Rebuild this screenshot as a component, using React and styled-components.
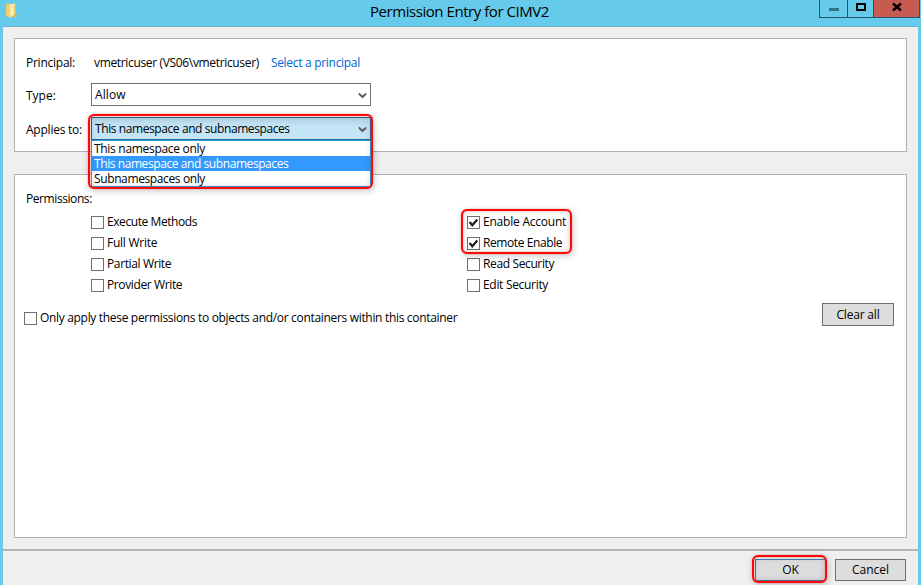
import React from "react";
import styled, { createGlobalStyle } from "styled-components";

const GlobalStyle = createGlobalStyle`
  *, *::before, *::after { box-sizing: border-box; }
  body { margin: 0; background: #66caea; }
`;

const Window = styled.div`
  width: 921px;
  height: 585px;
  overflow: hidden;
  display: flex;
  flex-direction: column;
  background: #66caea;
  color: #000;
  font: 12px/16px "Open Sans", "Noto Sans", sans-serif;
  white-space: nowrap;
`;

const TitleBar = styled.header`
  display: grid;
  grid-template-columns: 370px 1fr auto;
  height: 26px;
  padding-right: 1px;
`;

const FolderIcon = styled.svg`
  width: 14px;
  height: 17px;
  margin: 2px 0 0 5px;
`;

const Title = styled.h1`
  margin: 0;
  padding-top: 1px;
  font-size: 15px;
  line-height: 20px;
  font-weight: 400;
  letter-spacing: -0.45px;
`;

const WindowControls = styled.div`
  display: flex;
  height: 18px;
  border: 1px solid #24516b;
  border-top: 0;
`;

const ControlButton = styled.button`
  display: flex;
  justify-content: center;
  width: ${(p) => p.$width}px;
  padding: 0;
  border: 0;
  border-left: ${(p) => (p.$first ? "0" : "1px solid #24516b")};
  background: ${(p) => (p.$close ? "#c75b52" : "#66caea")};

  svg { display: block; width: 12px; height: 14px; }
`;

const Client = styled.main`
  flex: 1;
  display: flex;
  flex-direction: column;
  margin: 0 3px;
  padding-top: 11px;
  border-top: 1px solid #76afc4;
  background: #efefef;
`;

const Panel = styled.section`
  width: 893px;
  height: ${(p) => p.$height}px;
  margin: 0 0 ${(p) => p.$gap}px 11px;
  border: 1px solid #b1b1b1;
  background: #fff;
`;

const Text = styled.span`
  letter-spacing: ${(p) => p.$track || 0}px;
`;

const Link = styled.a`
  margin-left: 12px;
  color: #0066d6;
  letter-spacing: -0.3px;
`;

const PrincipalRow = styled.div`
  display: grid;
  grid-template-columns: 68px auto 1fr;
  padding: 16px 0 0 11px;
`;

const FieldRow = styled.div`
  display: grid;
  grid-template-columns: 65px 280px;
  align-items: center;
  height: 23px;
  margin: ${(p) => p.$top}px 0 0 11px;
`;

const FieldLabel = styled(Text)`
  padding-top: 3px;
`;

const Combo = styled.div`
  position: relative;
  height: 23px;
  display: flex;
  align-items: center;
  justify-content: space-between;
  padding: 0 3px 0 3px;
  border: 1px solid ${(p) => (p.$open ? "#2c628b" : "#707070")};
  background: ${(p) => (p.$open ? "linear-gradient(#b4d5e6, #c3e5f6 9px)" : "#fff")};

  > svg { width: 9px; height: 8px; }
`;

const Options = styled.ul`
  position: absolute;
  z-index: 1;
  top: 22px;
  left: -1px;
  width: 280px;
  margin: 0;
  padding: 0;
  list-style: none;
  border: 1px solid #26a0da;
  background: #fff;
`;

const Option = styled.li`
  height: 15px;
  padding-left: 2px;
  line-height: 15px;
  letter-spacing: ${(p) => p.$track}px;
  color: ${(p) => (p.$selected ? "#fff" : "#000")};
  background: ${(p) => (p.$selected ? "#3399ff" : "#fff")};
`;

const Highlight = styled.div`
  position: absolute;
  z-index: 2;
  top: ${(p) => p.$top}px;
  left: ${(p) => p.$left}px;
  width: ${(p) => p.$width}px;
  height: ${(p) => p.$height}px;
  border: 2px solid #ff0808;
  border-radius: 6px;
  box-shadow: 0 0 1px #f44, 1px 2px 7px rgba(0, 0, 0, 0.22), inset 0 0 1px #f44, inset 0 0 7px rgba(0, 0, 0, 0.17);
  pointer-events: none;
`;

const PermissionsLabel = styled.div`
  padding: 16px 0 0 11px;
  letter-spacing: -0.42px;
`;

const PermissionGrid = styled.div`
  display: grid;
  grid-template-columns: 376px 200px;
  padding: 5px 0 0 76px;
`;

const PermissionColumn = styled.div`
  position: relative;
  display: flex;
  flex-direction: column;
`;

const CheckLabel = styled.div`
  display: flex;
  align-items: center;
  gap: 3px;
  height: 21px;

  > ${Text} { padding-bottom: 1px; }
`;

const Box = styled.span`
  display: flex;
  width: 13px;
  height: 13px;
  border: 1px solid #707070;
  background: #fff;

  svg { width: 11px; height: 11px; }
`;

const ScopeRow = styled.div`
  display: flex;
  justify-content: space-between;
  padding: 7px 12px 0 9px;

  > ${CheckLabel} { margin-top: 5px; }
`;

const Button = styled.button`
  width: ${(p) => p.$width}px;
  height: ${(p) => p.$height}px;
  padding: 0;
  border: 1px solid ${(p) => (p.$primary ? "#3c7fb1" : "#707070")};
  background: #dddddd;
  color: #000;
  font: inherit;
  letter-spacing: ${(p) => p.$track || 0}px;
`;

const Footer = styled.footer`
  display: flex;
  justify-content: flex-end;
  gap: 9px;
  margin-top: 11px;
  padding: 8px 12px 0 0;
  border-top: 2px solid #b4b4b4;
`;

const ButtonSlot = styled.div`
  position: relative;
`;

const Chevron = () => (
  <svg viewBox="0 0 9 8">
    <path d="M1 2v1.7L4.5 7 8 3.7V2L4.5 4.8z" fill="#555" stroke="#555" strokeWidth=".6" />
  </svg>
);

function Check({ label, track, checked }) {
  return (
    <CheckLabel>
      <Box>
        {checked && (
          <svg viewBox="0 0 11 11">
            <path d="M1.6 5 4.3 8.2 9.3 2.5" fill="none" stroke="#212121" strokeWidth="2.3" />
          </svg>
        )}
      </Box>
      <Text $track={track}>{label}</Text>
    </CheckLabel>
  );
}

export default function App() {
  return (
    <Window>
      <GlobalStyle />
      <TitleBar>
        <FolderIcon viewBox="0 0 14 17">
          <path d="M1 2.2 4.5 1l1.6 1v13L1 14z" fill="#e5c564" />
          <path d="M4.2 2.6 9.6 1.4l.8 1V14l-5.4 1.6z" fill="#fbe9a6" />
          <path d="M9.4 3 11 3.8v8.6l1.2.8-2.4 2-4-.2 3.6-2.4z" fill="#dcbb5c" />
          <path d="M1 2.2 4.3 4v11.6L1 14z" fill="#efd06c" />
        </FolderIcon>
        <Title>Permission Entry for CIMV2</Title>
        <WindowControls>
          <ControlButton $width={27} $first aria-label="Minimize">
            <svg viewBox="0 0 12 14"><path d="M1 8h10v3H1z" fill="#35718a" /></svg>
          </ControlButton>
          <ControlButton $width={26} aria-label="Maximize">
            <svg viewBox="0 0 12 14"><path d="M2 4h8v6H2z" fill="none" stroke="#000" strokeWidth="2" /></svg>
          </ControlButton>
          <ControlButton $width={46} $close aria-label="Close">
            <svg viewBox="0 0 12 14"><path d="m2 3.5 8 7m0-7-8 7" stroke="#000" strokeWidth="2.4" /></svg>
          </ControlButton>
        </WindowControls>
      </TitleBar>
      <Client>
        <Panel $height={114} $gap={22}>
          <PrincipalRow>
            <Text $track={-0.25}>Principal:</Text>
            <Text $track={-0.34}>vmetricuser (VS06\vmetricuser)</Text>
            <Link>Select a principal</Link>
          </PrincipalRow>
          <FieldRow $top={12}>
            <FieldLabel>Type:</FieldLabel>
            <Combo>
              <Text $track={0.1}>Allow</Text>
              <Chevron />
            </Combo>
          </FieldRow>
          <FieldRow $top={11}>
            <FieldLabel $track={-0.23}>Applies to:</FieldLabel>
            <Combo $open>
              <Text $track={-0.41}>This namespace and subnamespaces</Text>
              <Chevron />
              <Options>
                <Option $track={-0.3}>This namespace only</Option>
                <Option $track={-0.42} $selected>This namespace and subnamespaces</Option>
                <Option $track={-0.38}>Subnamespaces only</Option>
              </Options>
              <Highlight $top={-4} $left={-4} $width={285} $height={75} />
            </Combo>
          </FieldRow>
        </Panel>
        <Panel $height={364} $gap={0}>
          <PermissionsLabel>Permissions:</PermissionsLabel>
          <PermissionGrid>
            <PermissionColumn>
              <Check label="Execute Methods" track={-0.42} />
              <Check label="Full Write" track={-0.26} />
              <Check label="Partial Write" track={-0.37} />
              <Check label="Provider Write" track={-0.38} />
            </PermissionColumn>
            <PermissionColumn>
              <Check label="Enable Account" track={-0.22} checked />
              <Check label="Remote Enable" track={-0.41} checked />
              <Check label="Read Security" track={-0.37} />
              <Check label="Edit Security" track={-0.31} />
              <Highlight $top={-3} $left={-6} $width={111} $height={45} />
            </PermissionColumn>
          </PermissionGrid>
          <ScopeRow>
            <Check
              label="Only apply these permissions to objects and/or containers within this container"
              track={-0.32}
            />
            <Button $width={72} $height={23} $track={-0.19}>Clear all</Button>
          </ScopeRow>
        </Panel>
        <Footer>
          <ButtonSlot>
            <Button $width={71} $height={22} $primary>OK</Button>
            <Highlight $top={-4} $left={-3} $width={75} $height={28} />
          </ButtonSlot>
          <Button $width={71} $height={22}>Cancel</Button>
        </Footer>
      </Client>
    </Window>
  );
}
